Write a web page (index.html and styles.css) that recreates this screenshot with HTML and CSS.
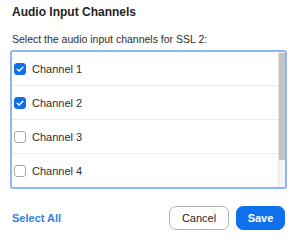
FILE: index.html
```html
<!DOCTYPE html>
<html>
<head>
<meta charset="utf-8">
<link rel="stylesheet" href="styles.css">
</head>
<body>
<div class="dialog">
  <h1 class="title">Audio Input Channels</h1>
  <p class="subtitle">Select the audio input channels for SSL 2:</p>
  <div class="list">
    <div class="rows">
      <label class="row"><span class="box checked"><svg viewBox="0 0 12 12" width="12" height="12"><path d="M3.2 6.2 L5.2 8.1 L8.9 4.2" fill="none" stroke="#fff" stroke-width="1.4" stroke-linecap="round" stroke-linejoin="round"/></svg></span><span class="label">Channel 1</span></label>
      <label class="row"><span class="box checked"><svg viewBox="0 0 12 12" width="12" height="12"><path d="M3.2 6.2 L5.2 8.1 L8.9 4.2" fill="none" stroke="#fff" stroke-width="1.4" stroke-linecap="round" stroke-linejoin="round"/></svg></span><span class="label">Channel 2</span></label>
      <label class="row"><span class="box"></span><span class="label">Channel 3</span></label>
      <label class="row last"><span class="box"></span><span class="label">Channel 4</span></label>
    </div>
    <div class="scrollbar"><div class="thumb"></div></div>
  </div>
  <div class="footer">
    <a class="select-all">Select All</a>
    <div class="actions">
      <button class="btn cancel">Cancel</button>
      <button class="btn save">Save</button>
    </div>
  </div>
</div>
</body>
</html>
```
FILE: styles.css
```css
html, body {
  margin: 0;
  background: #ffffff;
}
body {
  font-family: "Liberation Sans", Helvetica, Arial, sans-serif;
  color: #232323;
}
.dialog {
  padding: 5px 13px 0 10px;
}
.title {
  margin: 0 0 0 2px;
  font-size: 12px;
  line-height: 15px;
  font-weight: 700;
  color: #1f1f1f;
}
.subtitle {
  margin: 12px 0 0 2px;
  font-size: 10.5px;
  line-height: 14px;
  color: #2e2e2e;
}
.list {
  margin-top: 4px;
  height: 135px;
  border: 2px solid #8db6f4;
  border-radius: 3px;
  display: flex;
  overflow: hidden;
}
.rows {
  flex: 1;
  display: flex;
  flex-direction: column;
}
.scrollbar {
  width: 6px;
  background: #f5f5f5;
  border-left: 1px solid #e4e4e4;
  padding-top: 1px;
}
.thumb {
  height: 107px;
  background: #c3c3c3;
}
.row {
  display: flex;
  align-items: center;
  gap: 6px;
  height: 33px;
  flex-shrink: 0;
  padding-left: 2px;
  border-bottom: 1px solid #ececec;
}
.row.last {
  border-bottom: none;
}
.box {
  width: 12px;
  height: 12px;
  box-sizing: border-box;
  border: 1px solid #a9a9a9;
  border-radius: 3px;
  background: #fff;
  display: flex;
}
.box.checked {
  background: #0e71eb;
  border-color: #0e71eb;
}
.box svg {
  margin: -1px;
}
.label {
  font-size: 11px;
  color: #2e2e2e;
}
.footer {
  margin-top: 17px;
  margin-right: 2px;
  display: flex;
  align-items: center;
  justify-content: space-between;
  padding-left: 2px;
}
.select-all {
  font-size: 11px;
  font-weight: 700;
  color: #3a7fdc;
}
.actions {
  display: flex;
  gap: 7px;
}
.btn {
  font-family: "Liberation Sans", Helvetica, Arial, sans-serif;
  font-size: 11px;
  height: 24px;
  border-radius: 7px;
  padding: 0;
}
.cancel {
  width: 60px;
  background: #fff;
  border: 1px solid #b4b4b4;
  color: #262626;
}
.save {
  width: 49px;
  background: #0e71eb;
  border: 1px solid #0e71eb;
  color: #fff;
  font-weight: 700;
}
```
